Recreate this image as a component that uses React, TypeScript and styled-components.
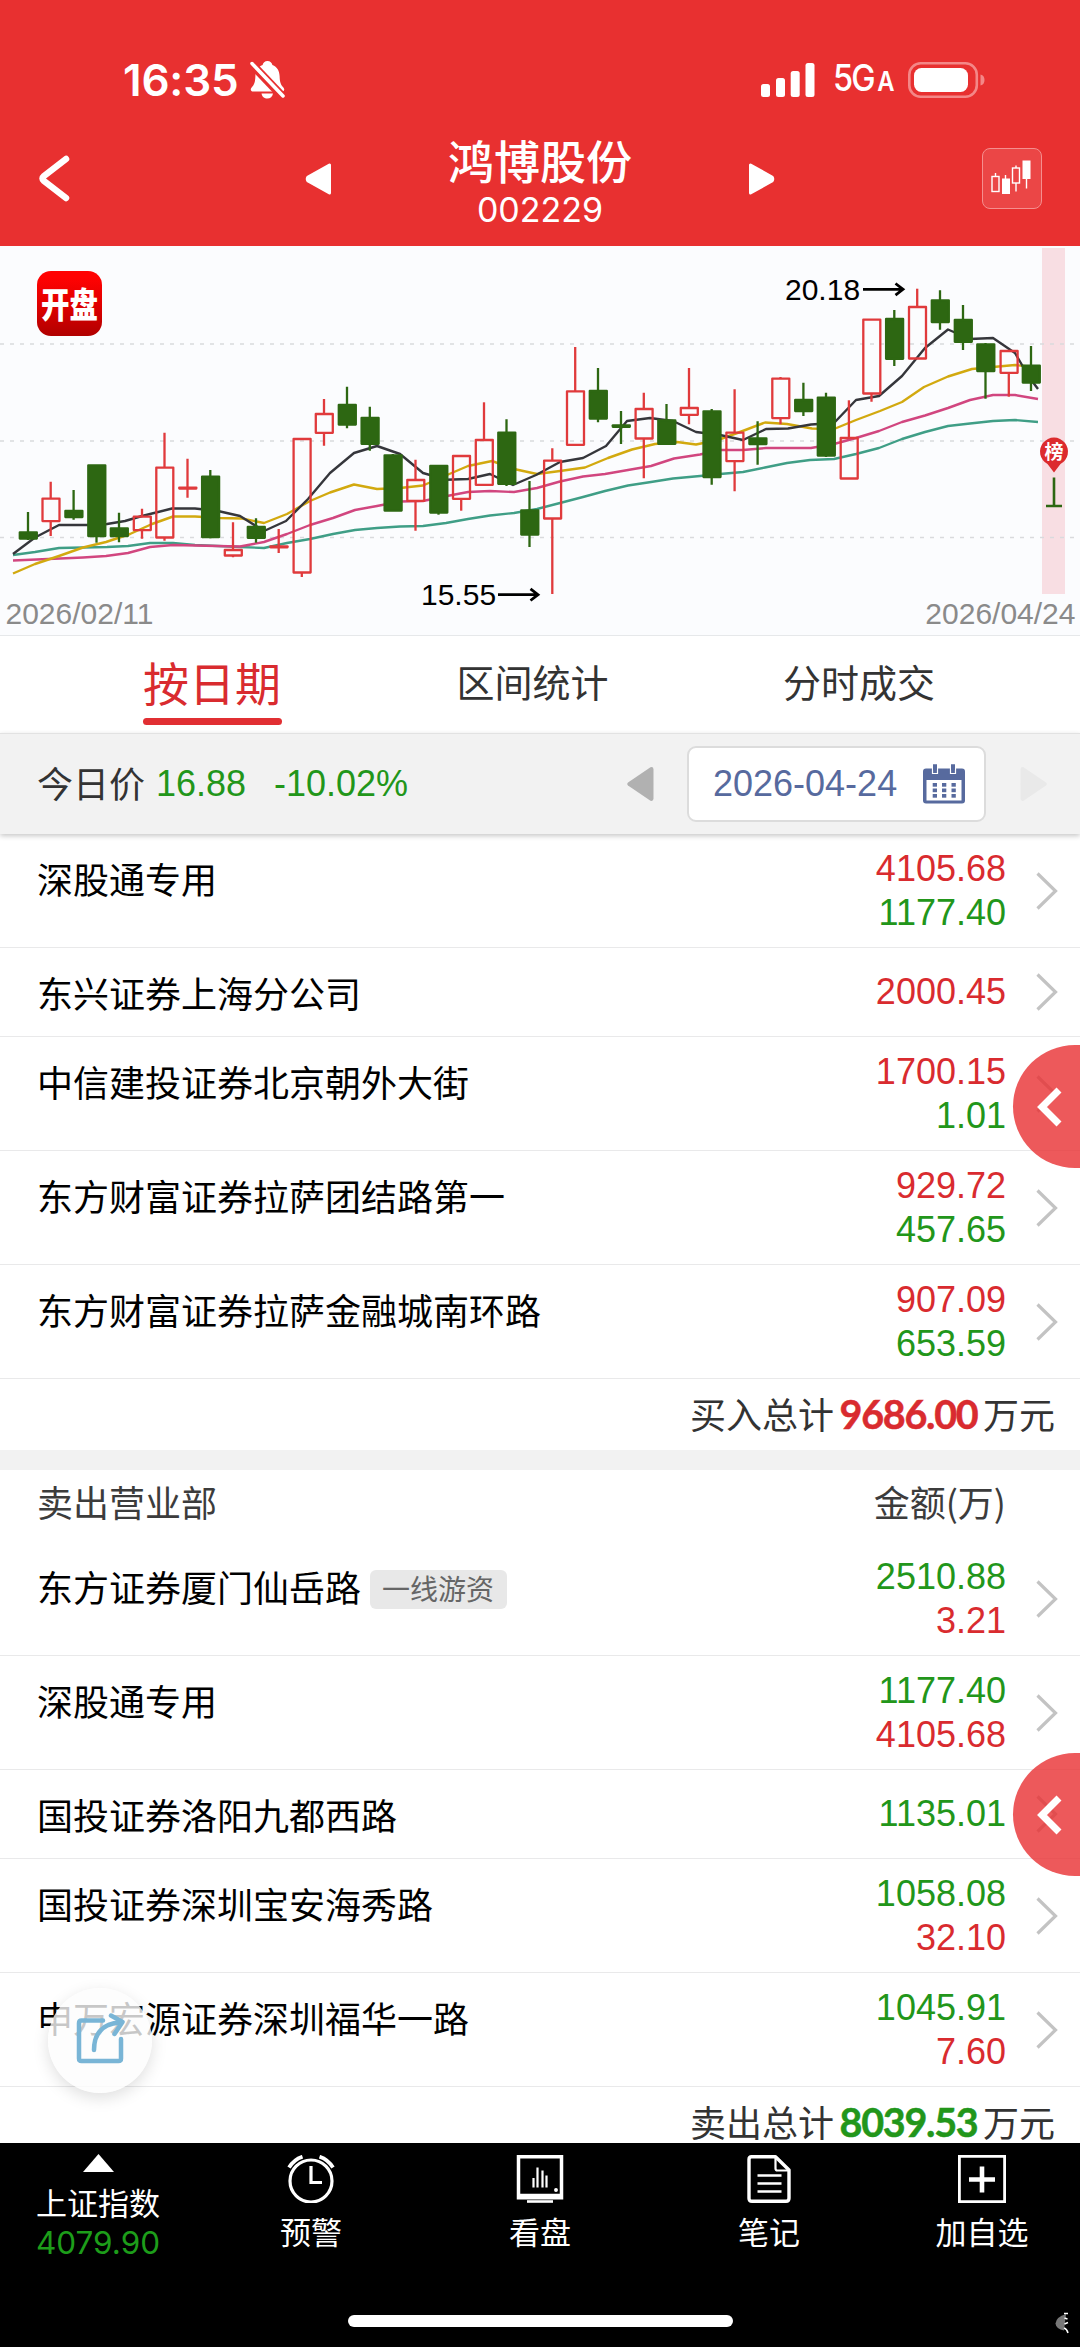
import React from "react";
import styled, { createGlobalStyle } from "styled-components";

const RED = "#d92b2f";
const GREEN = "#22961a";
const CANDLE_RED = "#e03a3c";
const CANDLE_GREEN = "#2d6712";
const SANS = `"Liberation Sans", "Noto Sans CJK SC", sans-serif`;
const UI = `Inter, "Noto Sans CJK SC", sans-serif`;

const Global = createGlobalStyle`
  html, body { margin: 0; padding: 0; background: #fff; }
  * { box-sizing: border-box; }
`;

const Screen = styled.div`
  position: relative;
  display: flex;
  flex-direction: column;
  width: 1080px;
  height: 2347px;
  overflow: hidden;
  background: #fff;
  font-family: ${SANS};
  color: #000;
`;

/* ---------- header ---------- */

const Header = styled.header`
  flex: none;
  height: 246px;
  background: #e83030;
  color: #fff;
  display: flex;
  flex-direction: column;
`;

const StatusBar = styled.div`
  height: 130px;
  padding: 56px 94px 0 123px;
  display: flex;
  justify-content: space-between;
  align-items: flex-start;
  font-family: ${UI};
`;

const StatusSide = styled.div`
  display: flex;
  align-items: center;
  height: 48px;
`;

const Clock = styled.span`
  font-size: 44px;
  font-weight: 600;
  line-height: 48px;
  width: 127px;
  letter-spacing: -0.2px;
`;

const Network = styled.span`
  display: inline-block;
  width: 93px;
  padding-left: 18px;
  font-size: 37px;
  font-weight: 500;
  line-height: 48px;
  letter-spacing: -2px;
  white-space: nowrap;
  transform: scaleX(0.88);
  transform-origin: 17px 50%;
  small {
    font-size: 27px;
    font-weight: 600;
    margin-left: 4px;
  }
`;

const NavBar = styled.div`
  flex: 1;
  display: grid;
  grid-template-columns: 305px 142px 1fr 142px 204px 101px;
  align-items: start;
`;

const NavCell = styled.div<{ $left?: number; $top?: number }>`
  padding-left: ${(p) => p.$left ?? 0}px;
  padding-top: ${(p) => p.$top ?? 0}px;
  svg { display: block; }
`;

const TitleBlock = styled.div`
  text-align: center;
  padding-top: 1px;
`;

const Title = styled.div`
  font-size: 46px;
  line-height: 57px;
  font-weight: 500;
  font-family: "Noto Sans CJK SC", sans-serif;
`;

const Code = styled.div`
  font-family: ${UI};
  font-size: 34px;
  line-height: 44px;
  font-weight: 400;
`;

const KlineButton = styled.div`
  width: 60px;
  height: 61px;
  margin-left: 3px;
  border: 1.5px solid #f58e8e;
  border-radius: 8px;
  background: #eb4646;
`;

/* ---------- chart ---------- */

const ChartPanel = styled.section`
  flex: none;
  position: relative;
  height: 389px;
  background: #fbfcfe;
  svg { display: block; }
`;

const AppBadge = styled.div`
  position: absolute;
  left: 37px;
  top: 25px;
  width: 65px;
  height: 65px;
  border-radius: 14px;
  display: flex;
  align-items: center;
  justify-content: center;
  background: linear-gradient(180deg, #ff0202 10%, #e20000 50%, #b00000 100%);
  span {
    font-family: "Noto Sans CJK SC", sans-serif;
    font-weight: 900;
    font-size: 28.5px;
    line-height: 28px;
    color: #fff;
    transform: translateY(-1px) scaleY(1.24);
  }
`;

/* ---------- tabs ---------- */

const Tabs = styled.nav`
  flex: none;
  height: 98px;
  border-top: 1px solid #e6e8ea;
  padding: 0 145px 0 143px;
  display: flex;
  justify-content: space-between;
  align-items: flex-start;
  background: #fff;
`;

const Tab = styled.div<{ $active?: boolean }>`
  font-family: "Noto Sans CJK SC", sans-serif;
  height: 90px;
  line-height: 90px;
  font-size: ${(p) => (p.$active ? 46 : 38)}px;
  color: ${(p) => (p.$active ? RED : "#333")};
  display: flex;
  flex-direction: column;
  &::after {
    content: "";
    display: ${(p) => (p.$active ? "block" : "none")};
    height: 7px;
    width: 139px;
    margin-top: -8px;
    border-radius: 4px;
    background: #e12f33;
    flex: none;
  }
`;

/* ---------- price / date bar ---------- */

const PriceBar = styled.div`
  flex: none;
  position: relative;
  z-index: 1;
  height: 101px;
  background: #f2f2f2;
  border-top: 1px solid #e2e2e2;
  padding: 0 33px 0 37px;
  display: flex;
  align-items: center;
  font-size: 36px;
  line-height: 44px;
  box-shadow: 0 2px 5px rgba(0, 0, 0, 0.22);
  svg { flex: none; display: block; }
`;

const PriceLabel = styled.span`
  font-family: "Noto Sans CJK SC", sans-serif;
  color: #333;
  width: 119px;
  margin-top: -5px;
`;

const PriceValue = styled.span<{ $width?: number }>`
  color: ${GREEN};
  width: ${(p) => (p.$width ? p.$width + "px" : "auto")};
`;

const DatePicker = styled.div`
  width: 299px;
  height: 76px;
  border: 2px solid #dcdcdc;
  border-radius: 9px;
  background: #fff;
  color: #576a9e;
  display: flex;
  align-items: center;
  justify-content: space-between;
  padding: 0 19px 0 24px;
  margin: 0 34px 0 33px;
`;

const Spacer = styled.div`
  flex: 1;
`;

/* ---------- lists ---------- */

const ListArea = styled.main`
  flex: 1;
  min-height: 0;
  overflow: hidden;
  background: #fff;
`;

const Row = styled.div<{ $short?: boolean }>`
  height: ${(p) => (p.$short ? 89 : 114)}px;
  border-bottom: 1px solid #e9e9ea;
  padding: 0 22px 0 37px;
  display: flex;
  align-items: center;
`;

const Name = styled.div`
  flex: 1;
  align-self: flex-start;
  display: flex;
  align-items: center;
  margin-top: 20px;
  font-family: "Noto Sans CJK SC", sans-serif;
  font-size: 36px;
  line-height: 48px;
  white-space: nowrap;
`;

const Tag = styled.span`
  margin-left: 9px;
  margin-top: 6px;
  padding: 0 12px;
  width: 137px;
  height: 39px;
  line-height: 36px;
  border-radius: 6px;
  background: #e8e8e8;
  color: #666;
  font-size: 28px;
`;

const Amounts = styled.div`
  text-align: right;
  font-size: 36px;
  line-height: 44px;
  margin-right: 30px;
`;

const Amount = styled.div<{ $up: boolean }>`
  color: ${(p) => (p.$up ? RED : GREEN)};
`;

const Total = styled.div`
  height: 71px;
  display: flex;
  justify-content: flex-end;
  align-items: center;
  padding-right: 25px;
  padding-bottom: 4px;
  font-family: "Noto Sans CJK SC", sans-serif;
  font-size: 36px;
  line-height: 44px;
  color: #333;
`;

const TotalValue = styled.b<{ $up: boolean }>`
  font-family: Lato, sans-serif;
  font-size: 39.5px;
  font-weight: 700;
  font-kerning: none;
  letter-spacing: -1.3px;
  -webkit-text-stroke: 0.5px currentColor;
  width: 149px;
  text-align: center;
  margin-top: 3px;
  color: ${(p) => (p.$up ? RED : GREEN)};
`;

const Divider = styled.div`
  height: 20px;
  background: #f2f2f2;
`;

const SectionHead = styled.div`
  height: 72px;
  padding: 9px 74px 0 37px;
  display: flex;
  justify-content: space-between;
  font-family: "Noto Sans CJK SC", sans-serif;
  font-size: 36px;
  line-height: 44px;
  color: #3c3c3c;
`;

/* ---------- overlays ---------- */

const SideHandle = styled.div<{ $top: number }>`
  position: absolute;
  right: 0;
  top: ${(p) => p.$top}px;
  width: 67px;
  height: 123px;
  border-radius: 62px 0 0 62px / 61.5px 0 0 61.5px;
  background: rgba(232, 48, 50, 0.8);
  z-index: 2;
  svg { position: absolute; left: 24px; top: 42px; }
`;

const ShareButton = styled.div`
  position: absolute;
  left: 48px;
  top: 1988px;
  width: 104px;
  height: 105px;
  border-radius: 50%;
  background: rgba(252, 252, 252, 0.79);
  box-shadow: 0 5px 16px rgba(0, 0, 0, 0.13);
  z-index: 2;
  svg { display: block; }
`;

/* ---------- bottom bar ---------- */

const BottomBar = styled.footer`
  flex: none;
  height: 204px;
  background: #000;
  color: #fff;
  display: flex;
  flex-direction: column;
  justify-content: space-between;
`;

const BottomItems = styled.div`
  display: grid;
  grid-template-columns: 196px 230px 228px 230px 196px;
`;

const BottomItem = styled.div`
  display: flex;
  flex-direction: column;
  align-items: center;
  padding-top: 12px;
  font-family: "Noto Sans CJK SC", sans-serif;
  font-size: 31px;
  line-height: 40px;
  svg { display: block; margin-bottom: 8px; }
`;

const IndexItem = styled(BottomItem)`
  padding-top: 11px;
  svg { margin-bottom: 10px; }
`;

const IndexValue = styled.span`
  font-family: ${UI};
  font-size: 31.5px;
  line-height: 42px;
  color: #1d9d1a;
`;

const HomeArea = styled.div`
  height: 35px;
  display: flex;
  align-items: flex-start;
  padding-left: 348px;
  padding-top: 3px;
  svg { margin-left: 322px; margin-top: -3px; }
`;

const HomeIndicator = styled.div`
  width: 385px;
  height: 12px;
  border-radius: 6px;
  background: #fff;
`;

/* ---------- data ---------- */

type Candle = [x: number, high: number, top: number, bottom: number, low: number, up: 0 | 1];

const candles: Candle[] = [
  [28, 512, 532, 538.7, 540, 0],
  [50.7, 481.7, 498.3, 521.3, 536, 1],
  [73.6, 490, 510.7, 517.3, 519.7, 0],
  [96.5, 465, 465, 536.3, 542.7, 0],
  [119, 512.7, 528, 536.3, 542.3, 0],
  [142, 508.7, 516.3, 530.3, 538.7, 1],
  [164.5, 432.7, 467.3, 537.7, 540.7, 1],
  [187.5, 458.7, 487.3, 488.7, 497.7, 1],
  [210.3, 470, 476.3, 537.3, 538.3, 0],
  [233, 522.3, 549.7, 555.7, 557.3, 1],
  [256, 518.3, 526.7, 538, 542.7, 0],
  [278.7, 529, 546, 547.5, 553, 1],
  [301.8, 438.7, 438.7, 572.7, 577, 1],
  [324, 399, 413.7, 433, 445.7, 1],
  [347, 386.7, 404.7, 424.7, 428.3, 0],
  [369.8, 406.7, 417.7, 444, 450.7, 0],
  [392.8, 454, 455, 510.7, 511, 0],
  [415.5, 459.7, 479.7, 501, 530.7, 1],
  [438.5, 465.7, 465.7, 512.7, 514.7, 0],
  [461.2, 455.7, 455.7, 499, 510.7, 1],
  [484, 402.3, 439.7, 485, 485, 1],
  [506.5, 419.3, 432.3, 484, 486, 0],
  [529.5, 481, 510, 534.7, 547, 0],
  [552.3, 448.3, 460.3, 518.7, 594, 1],
  [575.2, 347, 391, 445, 445, 1],
  [598, 368, 390.7, 418.7, 422.3, 0],
  [621, 411, 425, 427, 444, 0],
  [643.8, 392.7, 408.7, 438.7, 478.3, 1],
  [666.5, 404, 420, 444, 444, 0],
  [689, 368, 407.7, 415, 424.3, 1],
  [711.7, 409, 411, 477.3, 484.7, 0],
  [734.6, 389.3, 432.3, 461.3, 491.3, 1],
  [757.6, 421.3, 438, 444.3, 464.7, 0],
  [780.5, 377, 378.3, 418.3, 424.3, 1],
  [803.4, 382.7, 399.7, 411.3, 416, 0],
  [826, 392.7, 397.3, 455.7, 457, 0],
  [848.9, 400.3, 437.7, 478.7, 478.7, 1],
  [871.5, 319, 319.3, 393.7, 401.7, 1],
  [894.3, 310, 318.7, 359, 366, 0],
  [917.2, 288.7, 306.7, 358.7, 358.7, 1],
  [940, 290.3, 300, 322.3, 329.7, 0],
  [963, 305, 319.7, 342, 350, 0],
  [985.5, 343, 344, 371.3, 398.7, 0],
  [1008.8, 350.7, 350.7, 373, 396.7, 1],
  [1031, 346, 365.3, 382.7, 391, 0],
];

const averages: { color: string; points: string }[] = [
  {
    color: "#3f9e86",
    points:
      "13,555 35,552 59,548 83,547.5 107,547 128,546 150,543 173,543 195,545 218,546 240,547 264,548 287,543 310,539 333,534 355,530 377,528 400,526.5 423,526 446,523 468,519 490,515.5 514,513 537,509 560,503 583,497 605,491 628,485.5 651,482 673,478.5 700,476 720,474 743,472 765,467.5 787,463 810,460 834,459 856,454 879,448 902,439 925,432 948,426 970,423.5 993,421 1015,420 1038,422",
  },
  {
    color: "#d1467f",
    points:
      "13,560.5 60,558.5 83,557.5 106,556 128,553 150,547 173,545 217,546 240,546.5 264,542 287,534 310,525 333,518 355,510 377,506 400,501.5 423,501 447,496 468,492 490,491 514,492 537,488 560,481.5 583,476.5 605,474 628,470 651,466 674,458.5 700,454.5 720,450 743,450 766,448 811,448 834,444 856,438 879,431 902,422 925,415.5 948,408 970,400 993,395 1015,395 1038,399",
  },
  {
    color: "#d2a90f",
    points:
      "13,573.5 35,564 59,556 83,547.5 106,542 130,534 152,524 173,516.5 195,516.5 220,518 242,518.5 264,523 287,514 310,501 330,492.5 354,484.5 377,489 400,488 423,485.5 447,475 468,466 492,461 514,469 537,474 560,471 585,467.5 608,458 632,449.5 655,444 677,442 696,444.5 718,440 740,432 765,422.5 787,424 812,428.5 834,429 856,420 880,411 902,402 924,387 948,376.5 972,369 993,367 1015,365 1029,366.5",
  },
  {
    color: "#35363b",
    points:
      "13,554 35,537.5 59,525 90,525 107,524 125,521 142,516 172,508.5 195,508.5 218,511 240,516 264,531 286,521 308,499 330,473 354,453 377,446 400,454 423,473 446,479.7 468,479 490,474 513,485 536,475 560,462 583,458 606,446 627,421 650,418 673,421 696,432 720,435 743,440 766,429 788,428.5 811,424.5 834,423 856,400 879,396 902,376 925,348 948,329.5 970,339 993,338 1015,353 1029,377 1038,389",
  },
];

interface Broker {
  name: string;
  tag?: string;
  amounts: { value: string; up: boolean }[];
}

const up = (value: string) => ({ value, up: true });
const down = (value: string) => ({ value, up: false });

const buyers: Broker[] = [
  { name: "深股通专用", amounts: [up("4105.68"), down("1177.40")] },
  { name: "东兴证券上海分公司", amounts: [up("2000.45")] },
  { name: "中信建投证券北京朝外大街", amounts: [up("1700.15"), down("1.01")] },
  { name: "东方财富证券拉萨团结路第一", amounts: [up("929.72"), down("457.65")] },
  { name: "东方财富证券拉萨金融城南环路", amounts: [up("907.09"), down("653.59")] },
];

const sellers: Broker[] = [
  { name: "东方证券厦门仙岳路", tag: "一线游资", amounts: [down("2510.88"), up("3.21")] },
  { name: "深股通专用", amounts: [down("1177.40"), up("4105.68")] },
  { name: "国投证券洛阳九都西路", amounts: [down("1135.01")] },
  { name: "国投证券深圳宝安海秀路", amounts: [down("1058.08"), up("32.10")] },
  { name: "申万宏源证券深圳福华一路", amounts: [down("1045.91"), up("7.60")] },
];

/* ---------- parts ---------- */

const BellOff = () => (
  <svg width="35" height="40" viewBox="0 0 35 40">
    <path d="M17.5 1c-2.700 0-4.500 1.800-4.900 4C7.800 6.800 5.600 11 5.400 16c-.2 6-1 8.500-3.600 11.200C-.2 29.300.8 31.500 3.300 31.500h28.400c2.500 0 3.500-2.200 1.500-4.300-2.600-2.700-3.400-5.200-3.600-11.200-.2-5-2.400-9.200-7.200-11C22 2.800 20.200 1 17.500 1z" fill="#fff" />
    <path d="M11.500 33.500h11.500c-.4 3-2.700 5-5.700 5s-5.400-2-5.800-5z" fill="#fff" />
    <path d="M2 4.500 33.500 37.500" stroke="#e83030" strokeWidth="8.500" />
    <path d="M2 3.500 33 36" stroke="#fff" strokeWidth="3.500" strokeLinecap="round" />
  </svg>
);

const Signal = () => (
  <svg width="54" height="36" viewBox="0 0 54 36" fill="#fff">
    <rect x="0" y="22" width="9" height="13" rx="2.500" />
    <rect x="15" y="16" width="9" height="19" rx="2.500" />
    <rect x="29.700" y="9" width="9" height="26" rx="2.500" />
    <rect x="44.500" y="1" width="9" height="34" rx="2.500" />
  </svg>
);

const Battery = () => (
  <svg width="78" height="38" viewBox="0 0 78 38">
    <rect x="1.300" y="2.300" width="67.500" height="33.500" rx="11.500" fill="none" stroke="#f48787" strokeWidth="2.600" />
    <rect x="6" y="7" width="54" height="24" rx="7.500" fill="#fff" />
    <path d="M72.500 13.500c3 .8 4 3 4 5.500s-1 4.700-4 5.500z" fill="#f48787" />
  </svg>
);

const Triangle = ({ flip }: { flip?: boolean }) => (
  <svg width="28" height="34" viewBox="0 0 28 34">
    <path
      d="M3 15 24.500 3v28L3 19q-1.500-2 0-4z"
      fill="#fff"
      stroke="#fff"
      strokeWidth="3"
      strokeLinejoin="round"
      transform={flip ? "translate(28 0) scale(-1 1)" : undefined}
    />
  </svg>
);

const SmallTriangle = ({ flip, color }: { flip?: boolean; color: string }) => (
  <svg width="27" height="36" viewBox="0 0 27 36">
    <path
      d="M1 16.500 23.500 1.200Q26.500.5 26.500 3.500v29Q26.500 35.500 23.500 34.800L1 19.500Q-.5 18 1 16.500z"
      fill={color}
      transform={flip ? "translate(27 0) scale(-1 1)" : undefined}
    />
  </svg>
);

const Calendar = () => (
  <svg width="42" height="40" viewBox="0 0 42 40">
    <rect x="0" y="4.500" width="42" height="35" rx="3" fill="#576a9e" />
    <rect x="3.500" y="16" width="35" height="20.500" fill="#fff" />
    <path d="M9.500 0h5v9.500h-5zM27.500 0h5v9.500h-5z" fill="#576a9e" stroke="#fff" strokeWidth="1.200" />
    <path d="M9 4.500v-5h6v5zM27 4.500v-5h6v5z" fill="#fff" />
    <path d="M10 .3h4v6h-4zM28 .3h4v6h-4z" fill="#576a9e" />
    {[19, 24.5, 30].map((y) =>
      [9.700, 19, 28.500].map((x) => <rect key={`${x}-${y}`} x={x} y={y} width="4.300" height="3.700" fill="#576a9e" />)
    )}
  </svg>
);

const RowChevron = () => (
  <svg width="22" height="38" viewBox="0 0 22 38">
    <path d="M1.500 1.500 19.500 19 1.500 36.500" fill="none" stroke="#c3c3c3" strokeWidth="3.200" />
  </svg>
);

const CandleShape = ({ candle: [x, high, top, bottom, low, rising] }: { candle: Candle }) => {
  const color = rising ? CANDLE_RED : CANDLE_GREEN;
  return (
    <g stroke={color} strokeWidth="2.300" strokeLinejoin="round">
      <path d={`M${x} ${high}V${top}M${x} ${bottom}V${low}`} />
      <rect
        x={x - 8.2}
        y={top + 0.3}
        width="17"
        height={Math.max(bottom - top - 0.5, 0.8)}
        fill={rising ? "none" : color}
      />
    </g>
  );
};

const KlineChart = () => (
  <svg width="1080" height="389" viewBox="0 246 1080 389" fontFamily={SANS} fontSize="30">
    <rect x="1042" y="248" width="23" height="346" fill="#f8dee3" />
    {[344, 441, 537.5].map((y) => (
      <path key={y} d={`M0 ${y}H1080`} stroke="#d9dadd" strokeWidth="1.300" strokeDasharray="4 6" />
    ))}
    {averages.map((line) => (
      <polyline
        key={line.color}
        points={line.points}
        fill="none"
        stroke={line.color}
        strokeWidth="2.400"
        strokeLinejoin="round"
      />
    ))}
    {candles.map((candle) => (
      <CandleShape key={candle[0]} candle={candle} />
    ))}
    <path d="M1054 477.500V506M1046 506H1062" stroke={CANDLE_GREEN} strokeWidth="2.600" fill="none" />
    <path d="M1054 472.500 1047.500 464A14 14 0 1 1 1060.500 464z" fill="#dc2b2e" />
    <text x="1054" y="459" fontSize="19" fontWeight="700" fill="#fff" textAnchor="middle">榜</text>
    <g fill="none" stroke="#000" strokeWidth="2.800">
      <path d="M863 289.300H902M895.500 283.500 903 289.300 895.500 295.100" />
      <path d="M498 594.700H537M530.500 588.900 538 594.700 530.500 600.500" />
    </g>
    <text x="785" y="299.500">20.18</text>
    <text x="421" y="605">15.55</text>
    <text x="5.500" y="624.300" fill="#8a8a8a">2026/02/11</text>
    <text x="1075.500" y="624.300" fill="#8a8a8a" textAnchor="end">2026/04/24</text>
  </svg>
);

const BrokerRow = ({ broker }: { broker: Broker }) => (
  <Row $short={broker.amounts.length === 1}>
    <Name>
      {broker.name}
      {broker.tag && <Tag>{broker.tag}</Tag>}
    </Name>
    <Amounts>
      {broker.amounts.map((a) => (
        <Amount key={a.value} $up={a.up}>{a.value}</Amount>
      ))}
    </Amounts>
    <RowChevron />
  </Row>
);

const Handle = ({ top }: { top: number }) => (
  <SideHandle $top={top}>
    <svg width="26" height="40" viewBox="0 0 26 40">
      <path d="M22 3 5 20 22 37" fill="none" stroke="#fff" strokeWidth="7" />
    </svg>
  </SideHandle>
);

export default function App() {
  return (
    <Screen>
      <Global />
      <Header>
        <StatusBar>
          <StatusSide>
            <Clock>16:35</Clock>
            <BellOff />
          </StatusSide>
          <StatusSide>
            <Signal />
            <Network>5G<small>A</small></Network>
            <Battery />
          </StatusSide>
        </StatusBar>
        <NavBar>
          <NavCell $left={38} $top={24}>
            <svg width="34" height="50" viewBox="0 0 34 50">
              <path d="M28 5 6 22q-3 2.500 0 5L28 44" fill="none" stroke="#fff" strokeWidth="6.500" strokeLinecap="round" strokeLinejoin="round" />
            </svg>
          </NavCell>
          <NavCell $top={32}><Triangle /></NavCell>
          <TitleBlock>
            <Title>鸿博股份</Title>
            <Code>002229</Code>
          </TitleBlock>
          <NavCell $left={114} $top={32}><Triangle flip /></NavCell>
          <NavCell />
          <NavCell $top={18}>
            <KlineButton>
              <svg width="57" height="58" viewBox="0 0 57 58">
                <g fill="none" stroke="#fff" strokeWidth="1.400">
                  <rect x="9" y="27.500" width="7" height="15" />
                  <rect x="29.500" y="19" width="7" height="15" />
                  <path d="M12.500 24v3M33 16.500v2.500M33 34v8.500M43.500 30v9.500M22.500 26v4" />
                </g>
                <path d="M19 29.500h8V45h-8zM39.500 11.500h8V30h-8z" fill="#fff" />
              </svg>
            </KlineButton>
          </NavCell>
        </NavBar>
      </Header>

      <ChartPanel>
        <KlineChart />
        <AppBadge><span>开盘</span></AppBadge>
      </ChartPanel>

      <Tabs>
        <Tab $active>按日期</Tab>
        <Tab>区间统计</Tab>
        <Tab>分时成交</Tab>
      </Tabs>

      <PriceBar>
        <PriceLabel>今日价</PriceLabel>
        <PriceValue $width={118}>16.88</PriceValue>
        <PriceValue>-10.02%</PriceValue>
        <Spacer />
        <SmallTriangle color="#b1b1b1" />
        <DatePicker>
          2026-04-24
          <Calendar />
        </DatePicker>
        <SmallTriangle flip color="#e9e9e9" />
      </PriceBar>

      <ListArea>
        {buyers.map((b) => <BrokerRow key={b.name} broker={b} />)}
        <Total>
          买入总计<TotalValue $up>9686.00</TotalValue>万元
        </Total>
        <Divider />
        <SectionHead>
          <span>卖出营业部</span>
          <span>金额(万)</span>
        </SectionHead>
        {sellers.map((b) => <BrokerRow key={b.name} broker={b} />)}
        <Total>
          卖出总计<TotalValue $up={false}>8039.53</TotalValue>万元
        </Total>
      </ListArea>

      <BottomBar>
        <BottomItems>
          <IndexItem>
            <svg width="31" height="18" viewBox="0 0 31 18"><path d="M15.500 0 31 18H0z" fill="#fff" /></svg>
            上证指数
            <IndexValue>4079.90</IndexValue>
          </IndexItem>
          <BottomItem>
            <svg width="48" height="48" viewBox="0 0 48 48" fill="none" stroke="#fff" strokeWidth="3.200">
              <ellipse cx="24" cy="26" rx="21" ry="21" />
              <path d="M24 11v16.500H35" />
              <path d="M2 12.500Q7 4.500 15.500 1.700M46 12.500Q41 4.500 32.500 1.700" strokeWidth="3.800" />
            </svg>
            预警
          </BottomItem>
          <BottomItem>
            <svg width="48" height="48" viewBox="0 0 48 48" fill="none" stroke="#fff">
              <path d="M2.500 1.800h43v41h-43z" strokeWidth="3.500" />
              <path d="M1 41h46" strokeWidth="4.500" />
              <path d="M11 46.500h26" strokeWidth="2.600" />
              <path d="M17.500 23v9.500M21.500 12.500v20M26.500 15.500v17M30.500 20.500v12" strokeWidth="2.200" />
              <circle cx="40" cy="35" r="1.200" fill="#fff" strokeWidth="1.500" />
            </svg>
            看盘
          </BottomItem>
          <BottomItem>
            <svg width="44" height="48" viewBox="0 0 44 48" fill="none" stroke="#fff" strokeWidth="3.400">
              <path d="M4.500 1.700H28.500L42 15v28.300q0 3-3 3H5q-3 0-3-3V4.500q0-2.800 2.500-2.800z" strokeLinejoin="round" />
              <path d="M28.500 2v11.500q0 2 2 2H42" strokeWidth="2.200" />
              <path d="M10.500 20.500h24M10.500 28.500h24M10.500 36.500h24" strokeWidth="2.600" />
            </svg>
            笔记
          </BottomItem>
          <BottomItem>
            <svg width="48" height="48" viewBox="0 0 48 48" fill="none" stroke="#fff">
              <path d="M1.400 1.400h45.200v45.200H1.400z" strokeWidth="2.800" />
              <path d="M24 11.500v26M11 24.500h26" strokeWidth="4.600" />
            </svg>
            加自选
          </BottomItem>
        </BottomItems>
        <HomeArea>
          <HomeIndicator />
          <svg width="14" height="22" viewBox="0 0 14 22">
            <path d="M11 2Q1 5 .5 11.500 1 17 9 18.500z" fill="#777" />
            <path d="M9 1.500h4M9.500 6l3 1M9.500 12l3.500-1.500M9 16q3 1 4 5" fill="none" stroke="#fff" strokeWidth="1.500" />
          </svg>
        </HomeArea>
      </BottomBar>

      <Handle top={1045} />
      <Handle top={1753} />
      <ShareButton>
        <svg width="104" height="105" viewBox="0 0 104 105" fill="none" stroke="#79b5d6" strokeWidth="4.500" strokeLinecap="round" strokeLinejoin="round">
          <path d="M55 32.500H33.500q-2.500 0-2.500 2.500v35.500q0 2.500 2.500 2.500h37q2.500 0 2.500-2.500V51" />
          <path d="M46 62C46 45 55 35.500 72 34.500" />
          <path d="M63 27.500 74.500 34 66.500 46" />
        </svg>
      </ShareButton>
    </Screen>
  );
}
